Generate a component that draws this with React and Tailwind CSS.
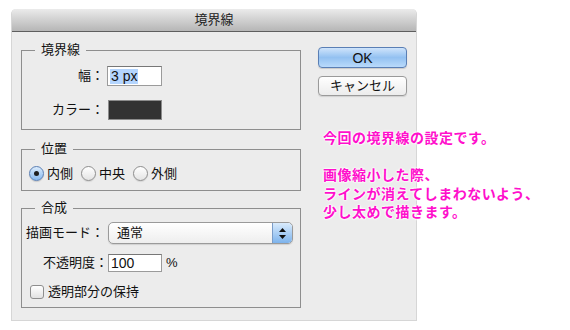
import React from "react";

// dialog chrome colours
const BODY = "bg-[#ececec]";
const FONT = "font-['Liberation_Sans','Noto_Sans_CJK_JP',sans-serif]";

const Group = ({ label, className = "", children }) => (
  <div className={`relative border border-[#8e8e8e] ${className}`}>
    <span className="absolute left-[13px] -top-[9px] bg-[#ececec] px-[6px] text-[13px] leading-[16px] text-[#111]">
      {label}
    </span>
    {children}
  </div>
);

const Radio = ({ checked, label }) => (
  <div className="flex items-center mr-[8px]">
    {checked ? (
      <span className="flex items-center justify-center w-[15px] h-[15px] rounded-full border border-[#5b7fb4] bg-gradient-to-b from-[#dcecfc] to-[#86b8ee] shadow-[0_1px_1px_rgba(0,0,0,0.15)]">
        <span className="w-[5px] h-[5px] rounded-full bg-[#1e1e1e]" />
      </span>
    ) : (
      <span className="w-[15px] h-[15px] rounded-full border border-[#8e8e8e] bg-gradient-to-b from-white to-[#e4e4e4] shadow-[0_1px_1px_rgba(0,0,0,0.1)]" />
    )}
    <span className="ml-[3px] text-[13px] leading-[16px]">{label}</span>
  </div>
);

const Stepper = () => (
  <div className="flex flex-col items-center justify-center gap-[3px] w-[20px] h-full rounded-r-[4px] border-l border-[#7a9cc8] bg-gradient-to-b from-[#d9ebfc] to-[#7db3ec]">
    <svg width="7" height="4" viewBox="0 0 7 4"><path d="M3.5 0 L7 4 L0 4 Z" fill="#111" /></svg>
    <svg width="7" height="4" viewBox="0 0 7 4"><path d="M0 0 L7 0 L3.5 4 Z" fill="#111" /></svg>
  </div>
);

export default function App() {
  return (
    <div className={`relative w-[570px] h-[330px] bg-white pt-[9px] pl-[11px] text-[#111] ${FONT}`}>
      {/* dialog */}
      <div className={`w-[406px] h-[312px] ${BODY} rounded-t-[5px] border-x border-b border-[#d6d6d6]`}>
        <div className="h-[23px] rounded-t-[5px] border-b border-[#5e5e5e] bg-gradient-to-b from-[#ebebeb] to-[#b6b6b6] flex items-center justify-center">
          <span className="text-[13px] leading-[16px] text-[#222]">境界線</span>
        </div>

        <div className="flex pl-[9px]">
          {/* left column */}
          <div className="w-[280px]">
            <Group label="境界線" className="mt-[18px] pt-[15px] pb-[9px]">
              <div className="flex items-center h-[20px]">
                <span className="w-[82px] text-right text-[13px]">幅：</span>
                <div className="ml-[3px] w-[55px] h-[20px] bg-white border border-[#9b9b9b] border-t-[#777] flex items-center pl-[2px]">
                  <span className="bg-[#b4d5fe] px-[1px] text-[14px] leading-[15px]">3 px</span>
                </div>
              </div>
              <div className="flex items-center h-[20px] mt-[14px]">
                <span className="w-[82px] text-right text-[13px]">カラー：</span>
                <div className="ml-[4px] w-[54px] h-[20px] bg-[#333333] border border-[#8c8c8c]" />
              </div>
            </Group>

            <Group label="位置" className="mt-[19px] h-[42px] pt-[16px] pl-[7px]">
              <div className="flex items-center h-[15px]">
                <Radio checked label="内側" />
                <Radio label="中央" />
                <Radio label="外側" />
              </div>
            </Group>

            <Group label="合成" className="mt-[17px] h-[100px] pt-[13px]">
              <div className="flex items-center h-[22px]">
                <span className="w-[86px] pl-[4px] text-[13px]">描画モード：</span>
                <div className="flex items-center justify-between w-[185px] h-[22px] rounded-[5px] border border-[#9a9a9a] bg-gradient-to-b from-white to-[#eeeeee] shadow-[0_1px_1px_rgba(0,0,0,0.12)] overflow-hidden">
                  <span className="pl-[8px] text-[13px]">通常</span>
                  <Stepper />
                </div>
              </div>
              <div className="flex items-center h-[18px] mt-[10px]">
                <span className="w-[86px] text-right text-[13px]">不透明度：</span>
                <div className="w-[54px] h-[18px] bg-white border border-[#9b9b9b] border-t-[#777] flex items-center pl-[2px]">
                  <span className="text-[14px] leading-[15px]">100</span>
                </div>
                <span className="ml-[4px] text-[13px]">%</span>
              </div>
              <div className="flex items-center h-[14px] mt-[13px] pl-[8px]">
                <span className="w-[14px] h-[14px] rounded-[3px] border border-[#8e8e8e] bg-gradient-to-b from-white to-[#e2e2e2]" />
                <span className="ml-[4px] text-[13px]">透明部分の保持</span>
              </div>
            </Group>
          </div>

          {/* buttons */}
          <div className="ml-[17px] w-[89px] flex flex-col">
            <button className="mt-[15px] h-[21px] rounded-[4px] border border-[#5a7fb5] bg-gradient-to-b from-[#cfe4fb] via-[#93c1f1] to-[#b9dafb] text-[14px] leading-[16px] text-[#111] shadow-[0_1px_1px_rgba(0,0,0,0.15)]">
              OK
            </button>
            <button className="mt-[8px] h-[20px] rounded-[4px] border border-[#9a9a9a] bg-gradient-to-b from-white to-[#ececec] text-[13px] leading-[16px] text-[#111] shadow-[0_1px_1px_rgba(0,0,0,0.12)]">
              キャンセル
            </button>
          </div>
        </div>
      </div>

      {/* annotation over the dialog */}
      <div className="absolute left-[323px] top-[128px] text-[14px] leading-[18.5px] tracking-[0.5px] font-bold text-[#ff10cc] font-['Noto_Sans_CJK_JP',sans-serif] [text-shadow:0_0_2px_#fff,0_0_2px_#fff,0_0_2px_#fff,0_0_3px_#fff]">
        <p>今回の境界線の設定です。</p>
        <p>&nbsp;</p>
        <p>画像縮小した際、</p>
        <p>ラインが消えてしまわないよう、</p>
        <p>少し太めで描きます。</p>
      </div>
    </div>
  );
}
